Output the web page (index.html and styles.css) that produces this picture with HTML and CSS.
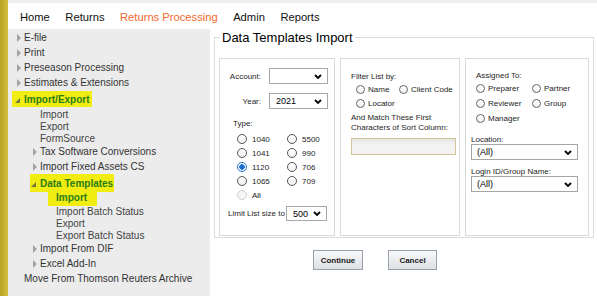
FILE: index.html
```html
<!DOCTYPE html>
<html lang="en">
<head>
    <meta charset="UTF-8">
    <title>Data Templates Import</title>
    <link rel="stylesheet" href="styles.css">
</head>
<body>
    <div class="edge"></div>
    <div class="app">
        <div class="topband"></div>
        <header class="topnav">
            <a href="#">Home</a>
            <a href="#">Returns</a>
            <a href="#" class="active">Returns Processing</a>
            <a href="#">Admin</a>
            <a href="#">Reports</a>
        </header>
        <div class="layout">
            <nav class="sidebar">
                <div class="tree-row"><span class="lbl"><span class="tw closed"></span>E-file</span></div>
                <div class="tree-row"><span class="lbl"><span class="tw closed"></span>Print</span></div>
                <div class="tree-row"><span class="lbl"><span class="tw closed"></span>Preseason Processing</span></div>
                <div class="tree-row"><span class="lbl"><span class="tw closed"></span>Estimates &amp; Extensions</span></div>
                <div class="tree-row hl top-hl"><span class="lbl"><span class="tw open"></span>Import/Export</span></div>
                <div class="tree-row leaf lv1"><span class="lbl"><span class="tw"></span>Import</span></div>
                <div class="tree-row leaf lv1"><span class="lbl"><span class="tw"></span>Export</span></div>
                <div class="tree-row leaf lv1"><span class="lbl"><span class="tw"></span>FormSource</span></div>
                <div class="tree-row lv1"><span class="lbl"><span class="tw closed"></span>Tax Software Conversions</span></div>
                <div class="tree-row lv1"><span class="lbl"><span class="tw closed"></span>Import Fixed Assets CS</span></div>
                <div class="tree-row lv1 hl sub-hl"><span class="lbl"><span class="tw open"></span>Data Templates</span></div>
                <div class="tree-row leaf lv2 hl leaf-hl"><span class="lbl"><span class="tw"></span>Import</span></div>
                <div class="tree-row leaf lv2"><span class="lbl"><span class="tw"></span>Import Batch Status</span></div>
                <div class="tree-row leaf lv2"><span class="lbl"><span class="tw"></span>Export</span></div>
                <div class="tree-row leaf lv2"><span class="lbl"><span class="tw"></span>Export Batch Status</span></div>
                <div class="tree-row lv1"><span class="lbl"><span class="tw closed"></span>Import From DIF</span></div>
                <div class="tree-row lv1"><span class="lbl"><span class="tw closed"></span>Excel Add-In</span></div>
                <div class="tree-row"><span class="lbl"><span class="tw"></span>Move From Thomson Reuters Archive</span></div>
            </nav>

            <main class="main">
                <fieldset class="panel">
                    <legend>Data Templates Import</legend>
                    <div class="cols">
                        <!-- Account / Year / Type -->
                        <div class="col col-a">
                            <div class="pair">
                                <span class="flabel">Account:</span>
                                <div class="select w59"><span></span><svg class="chev" width="8" height="5" viewBox="0 0 8 5"><path d="M1 1l3 3 3-3" fill="none" stroke="#000" stroke-width="1.8"/></svg></div>
                            </div>
                            <div class="pair">
                                <span class="flabel">Year:</span>
                                <div class="select w59"><span>2021</span><svg class="chev" width="8" height="5" viewBox="0 0 8 5"><path d="M1 1l3 3 3-3" fill="none" stroke="#000" stroke-width="1.8"/></svg></div>
                            </div>
                            <div class="cap type-label">Type:</div>
                            <div class="type-grid">
                                <label class="opt"><input type="radio" name="type">1040</label>
                                <label class="opt"><input type="radio" name="type">5500</label>
                                <label class="opt"><input type="radio" name="type">1041</label>
                                <label class="opt"><input type="radio" name="type">990</label>
                                <label class="opt"><input type="radio" name="type" checked>1120</label>
                                <label class="opt"><input type="radio" name="type">706</label>
                                <label class="opt"><input type="radio" name="type">1065</label>
                                <label class="opt"><input type="radio" name="type">709</label>
                                <label class="opt off"><input type="radio" name="type" disabled>All</label>
                            </div>
                            <div class="limit">
                                <span>Limit List size to</span>
                                <div class="select w41"><span>500</span><svg class="chev" width="8" height="5" viewBox="0 0 8 5"><path d="M1 1l3 3 3-3" fill="none" stroke="#000" stroke-width="1.8"/></svg></div>
                            </div>
                        </div>

                        <!-- Filter -->
                        <div class="col col-b">
                            <div class="cap">Filter List by:</div>
                            <div class="choice-grid grid-b">
                                <label class="opt sm"><input type="radio" name="filter">Name</label>
                                <label class="opt sm"><input type="radio" name="filter">Client Code</label>
                                <label class="opt sm"><input type="radio" name="filter">Locator</label>
                            </div>
                            <div class="match">And Match These First<br>Characters of Sort Column:</div>
                            <input class="textbox" type="text">
                        </div>

                        <!-- Assigned -->
                        <div class="col col-c">
                            <div class="cap indent">Assigned To:</div>
                            <div class="choice-grid grid-c">
                                <label class="opt sm"><input type="radio" name="assigned">Preparer</label>
                                <label class="opt sm"><input type="radio" name="assigned">Partner</label>
                                <label class="opt sm"><input type="radio" name="assigned">Reviewer</label>
                                <label class="opt sm"><input type="radio" name="assigned">Group</label>
                                <label class="opt sm"><input type="radio" name="assigned">Manager</label>
                            </div>
                            <div class="cap loc">Location:</div>
                            <div class="select wide"><span>(All)</span><svg class="chev" width="8" height="5" viewBox="0 0 8 5"><path d="M1 1l3 3 3-3" fill="none" stroke="#000" stroke-width="1.8"/></svg></div>
                            <div class="cap login">Login ID/Group Name:</div>
                            <div class="select wide"><span>(All)</span><svg class="chev" width="8" height="5" viewBox="0 0 8 5"><path d="M1 1l3 3 3-3" fill="none" stroke="#000" stroke-width="1.8"/></svg></div>
                        </div>
                    </div>
                </fieldset>

                <div class="actions">
                    <button class="btn">Continue</button>
                    <button class="btn btn-cancel">Cancel</button>
                </div>
            </main>
        </div>
    </div>
</body>
</html>
```

FILE: styles.css
```css
/* Stile generale */
body {
    margin: 0;
    display: flex;
    min-height: 100vh;
    font-family: "Liberation Sans", Arial, sans-serif;
    background: #fff;
}

.edge {
    width: 8px;
    flex: none;
    background: linear-gradient(to right, #b8a323, #d3c13b);
}

.app {
    flex: 1;
    display: flex;
    flex-direction: column;
}

.topband {
    height: 3px;
    background: #efefef;
}

.topnav {
    height: 24px;
    padding: 2px 0 0 12px;
    display: flex;
    gap: 15.5px;
    font-size: 11.2px;
    line-height: 24px;
}

.topnav a {
    color: #111;
    text-decoration: none;
}

.topnav a.active {
    color: #f4692b;
}

.layout {
    flex: 1;
    display: flex;
}

/* Menu laterale */
.sidebar {
    width: 202px;
    flex: none;
    background: #ececec;
    padding-top: 1px;
    font-size: 10px;
    color: #333;
}

.tree-row {
    display: flex;
    align-items: center;
    height: 15px;
    padding-left: 9px;
    white-space: nowrap;
}

.tree-row.lv1 {
    padding-left: 25px;
}

.tree-row.lv2 {
    padding-left: 41px;
}

.tree-row.leaf {
    height: 12px;
    color: #444;
}

.lbl {
    display: flex;
    align-items: center;
}

.tw {
    width: 7px;
    flex: none;
    display: flex;
    align-items: center;
}

.tw.closed::before {
    content: "";
    border-left: 4px solid #a2a2a2;
    border-top: 4px solid transparent;
    border-bottom: 4px solid transparent;
}

.tw.open::before {
    content: "";
    margin-left: -2px;
    margin-top: 2px;
    border-bottom: 5px solid #6f7a3a;
    border-left: 5px solid transparent;
}

.tree-row.hl .lbl {
    background: #f1ec12;
    color: #2a7d18;
    font-weight: bold;
}

.tree-row.top-hl {
    height: 16px;
    margin: 1px 0;
}

.top-hl .lbl {
    height: 16px;
    margin-left: -5px;
    padding: 0 2px 0 5px;
}

.tree-row.sub-hl {
    height: 18px;
}

.sub-hl .lbl {
    height: 18px;
    margin-left: -3px;
    padding: 0 1px 0 3px;
}

.tree-row.leaf-hl {
    height: 13px;
}

.leaf-hl .lbl {
    height: 15px;
    margin-left: -1px;
    padding: 0 10px 2px 1px;
    box-sizing: border-box;
}

/* Contenuto */
.main {
    flex: 1;
    padding: 1px 3px 0 4px;
}

.panel {
    margin: 0;
    border: 1px solid #dcdcdc;
    padding: 13px 4px 1px;
}

.panel legend {
    font-size: 13px;
    line-height: 15px;
    padding: 0 2px;
    margin-left: 1px;
    color: #000;
}

.cols {
    display: flex;
    gap: 5px;
    height: 178px;
}

.col {
    box-sizing: border-box;
    border: 1px solid #dadada;
    font-size: 8px;
    color: #1e1e1e;
}

.col-a {
    width: 116px;
    padding: 9px 0 0 8px;
}

.col-b {
    width: 120px;
    padding: 13px 0 0 10px;
}

.col-c {
    width: 124px;
    padding: 12px 0 0 5px;
}

.pair {
    display: flex;
    align-items: center;
    gap: 8px;
    height: 16px;
    margin-bottom: 9px;
}

.flabel {
    width: 33px;
    text-align: right;
}

.select {
    box-sizing: border-box;
    height: 16px;
    display: flex;
    align-items: center;
    justify-content: space-between;
    padding: 0 5px 0 6px;
    border: 1px solid #a6a6a6;
    background: #fff;
    font-size: 9px;
    color: #000;
}

.select.w59 {
    width: 59px;
}

.select.w41 {
    width: 41px;
    height: 15px;
}

.select.wide {
    width: 107px;
    padding-left: 5px;
}

.cap {
    line-height: 10px;
}

.type-label {
    margin: 10px 0 0 5px;
}

.type-grid {
    display: grid;
    grid-template-columns: 50px auto;
    grid-auto-rows: 14px;
    margin: 3px 0 0 9px;
}

.opt {
    display: flex;
    align-items: center;
    gap: 5px;
}

.opt input {
    appearance: none;
    -webkit-appearance: none;
    width: 10px;
    height: 10px;
    margin: 0;
    flex: none;
    border: 1px solid #555;
    border-radius: 50%;
    background: linear-gradient(#fff, #f1f1f1);
}

.opt input:checked {
    border-color: #1a6fd0;
    background: radial-gradient(circle, #1a6fd0 0 2.5px, #fff 3px);
}

.opt.off {
    color: #222;
}

.opt.off input {
    border-color: #cfcfcf;
    background: #f5f5f5;
}

.opt.sm {
    gap: 3px;
}

.opt.sm input {
    width: 9px;
    height: 9px;
    border-color: #666;
}

.limit {
    display: flex;
    align-items: center;
    gap: 1px;
    height: 15px;
    margin-top: 4px;
}

.choice-grid {
    display: grid;
    margin-left: 5px;
}

.grid-b {
    grid-template-columns: 43px auto;
    grid-auto-rows: 14px;
}

.grid-c {
    grid-template-columns: 56px auto;
    grid-auto-rows: 15px;
}

.match {
    margin-top: 3px;
    line-height: 9.5px;
}

.textbox {
    display: block;
    box-sizing: border-box;
    width: 105px;
    height: 17px;
    margin: 5.5px 0 0;
    border: 1px solid #d3c39d;
    background: linear-gradient(#e6e6e6, #f5f5f5 45%, #f1f1f1);
}

.indent {
    margin-left: 5px;
}

.cap.loc {
    margin-top: 9px;
    line-height: 9px;
}

.cap.login {
    margin-top: 8px;
    line-height: 8px;
}

.actions {
    display: flex;
    gap: 25px;
    margin-top: 12px;
    padding-left: 99px;
}

.btn {
    width: 50px;
    height: 20px;
    padding: 0;
    border: 1px solid #9aa1aa;
    background: linear-gradient(#f8f9fa, #dde0e4);
    font-family: "Liberation Sans", Arial, sans-serif;
    font-size: 8px;
    font-weight: bold;
    color: #1a1a1a;
}

.btn-cancel {
    width: 49px;
}
```
